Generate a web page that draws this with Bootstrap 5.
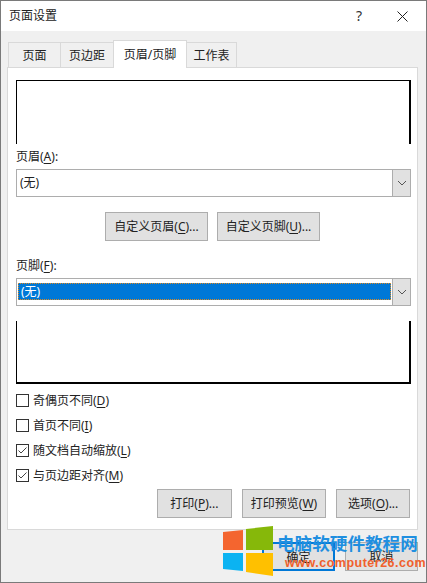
<!doctype html>
<html lang="zh"><head><meta charset="utf-8"><title>页面设置</title>
<link rel="stylesheet" href="https://cdn.jsdelivr.net/npm/bootstrap@5.3.0/dist/css/bootstrap.min.css">
<style>
html,body{margin:0;background:#f0f0f0}
body{width:427px;height:583px;overflow:hidden;font:12px/16px "Noto Sans","Noto Sans CJK SC",sans-serif;color:#222}
.win{position:relative;width:427px;height:583px;border:1px solid #7a7a7a;background:#f0f0f0;overflow:hidden}
.ttl{height:30px;background:#fff;padding:0 8px}
.ttl-t{font-size:12px}
.q{font-size:14px;margin-right:35px;color:#333}
.xb{margin-right:10px}
.tabrow{padding:10px 0 0 7px;height:36px;align-items:flex-end}
.tb{height:25px;width:53px;border:1px solid #d9d9d9;border-bottom:0;border-left:0;background:#f0f0f0;text-align:center;line-height:25px}
.tb:first-child{border-left:1px solid #d9d9d9}
.tb.on{width:74px;height:28px;background:#fff;line-height:27px;margin-bottom:-1px;position:relative;z-index:1;border-left:1px solid #d9d9d9;margin-left:-1px}
.tb.w4{width:50px}
.panel{margin-left:6px;width:411px;height:463px;background:#fff;border:1px solid #d9d9d9;padding:12px 7px 0 8px}
.pv{width:395px;height:64px;background:#fff}
.pv-top{border-top:1px solid #000;border-left:1px solid #000;border-right:2px solid #000}
.pv-bot{border-left:1px solid #000;border-right:2px solid #000;border-bottom:2px solid #000;margin-top:15px;height:63px}
.lbl{line-height:16px;margin-top:5px;height:16px}
.lbl2{margin-top:17px}
.u{text-decoration:underline;text-underline-offset:2px}
.cb{margin-top:4px;height:28px;width:395px;border:1px solid #adadad;background:#fff;display:flex}
.cb-v{flex:1;padding:1px 3px;line-height:24px;font-size:12px}
.cb-a{width:18px;background:#e1e1e1;border-left:1px solid #adadad;display:flex;align-items:center;justify-content:center}
.cb-s{background:#0078d7;color:#fff;outline:1px dotted #e08a20;outline-offset:-1px;padding:1px 3px;line-height:15px;margin:4px 1px;height:17px}
.sel-w{flex:1;padding:0}
.wb{background:#e1e1e1;border:1px solid #adadad;height:29px;line-height:27px;text-align:center;color:#222;padding:0;white-space:nowrap}
.w103{width:103px}.w75{width:75px}.w85{width:85px}.w74{width:74px}
.br{margin-top:15px;height:29px;padding-left:89px;gap:9px}
.chk{height:25px;gap:4px;align-items:center}
.bx{width:13px;height:13px;border:1px solid #333;background:#fff;display:block;flex:none}
.chks{margin-top:4px}
.br2{gap:10px;padding-left:141px;margin-top:1px}
.foot{position:relative;height:52px}
.ok{position:absolute;left:261px;top:12px;width:73px;height:29px;border:2px solid #0078d7}
.can{position:absolute;left:344px;top:12px;width:73px;height:29px}
.wm{position:absolute;left:221px;top:525px;width:205px;height:57px;pointer-events:none}
.wm-logo{position:absolute;left:0;top:0}
.wm-a{position:absolute;left:55px;top:7px;font:700 17.6px/20px "Noto Sans CJK SC",sans-serif;color:#1f8fe0;white-space:nowrap}
.wm-b{position:absolute;left:63px;top:29px;font:700 12.5px/16px "Liberation Sans",sans-serif;letter-spacing:.5px;color:#f0602c;white-space:nowrap}
</style></head><body>
<div class="win">
<div class="ttl d-flex align-items-center justify-content-between"><span class="ttl-t">页面设置</span>
<div class="d-flex align-items-center"><span class="q">?</span><svg width="11" height="11" viewBox="0 0 11 11" class="xb"><path d="M.5.5l10 10M10.500.5l-10 10" stroke="#222" stroke-width="1" fill="none"/></svg></div></div>
<div class="tabrow d-flex"><div class="tb">页面</div><div class="tb">页边距</div><div class="tb on">页眉/页脚</div><div class="tb w4">工作表</div></div>
<div class="panel">
<div class="pv pv-top"></div>
<div class="lbl">页眉(<span class="u">A</span>):</div>
<div class="cb"><div class="cb-v">(无)</div><div class="cb-a"><svg width="10" height="6" viewBox="0 0 10 6"><path d="M1 1l4 4 4-4" stroke="#555" fill="none"/></svg></div></div>
<div class="d-flex br"><button class="wb w103">自定义页眉(<span class="u">C</span>)...</button><button class="wb w103">自定义页脚(<span class="u">U</span>)...</button></div>
<div class="lbl lbl2">页脚(<span class="u">F</span>):</div>
<div class="cb"><div class="sel-w"><div class="cb-s">(无)</div></div><div class="cb-a"><svg width="10" height="6" viewBox="0 0 10 6"><path d="M1 1l4 4 4-4" stroke="#555" fill="none"/></svg></div></div>
<div class="pv pv-bot"></div>
<div class="chks">
<div class="d-flex chk"><span class="bx"></span><span>奇偶页不同(<span class="u">D</span>)</span></div>
<div class="d-flex chk"><span class="bx"></span><span>首页不同(<span class="u">I</span>)</span></div>
<div class="d-flex chk"><svg class="bx" viewBox="0 0 11 11"><path d="M1.500 5.500l2.500 2.500 5.500-5.500" stroke="#444" fill="none"/></svg><span>随文档自动缩放(<span class="u">L</span>)</span></div>
<div class="d-flex chk"><svg class="bx" viewBox="0 0 11 11"><path d="M1.500 5.500l2.500 2.500 5.500-5.500" stroke="#444" fill="none"/></svg><span>与页边距对齐(<span class="u">M</span>)</span></div>
</div>
<div class="d-flex br2"><button class="wb w75">打印(<span class="u">P</span>)...</button><button class="wb w85">打印预览(<span class="u">W</span>)</button><button class="wb w74">选项(<span class="u">O</span>)...</button></div>
</div>
<div class="foot"><button class="wb ok">确定</button><button class="wb can">取消</button></div>
<div class="wm">
<svg class="wm-logo" width="52" height="51" viewBox="0 0 52 51"><polygon points="1,6 21,4 21,24 1,24" fill="#f4652f"/><polygon points="24,3 51,0 51,24 24,24" fill="#86b80a"/><polygon points="1,27 21,27 21,45 1,43" fill="#0bb3f2"/><polygon points="24,27 51,27 51,50 24,46" fill="#ffc000"/></svg>
<div class="wm-a">电脑软硬件教程网</div><div class="wm-b">www.computer26.com</div>
</div>
</div>
</body></html>
